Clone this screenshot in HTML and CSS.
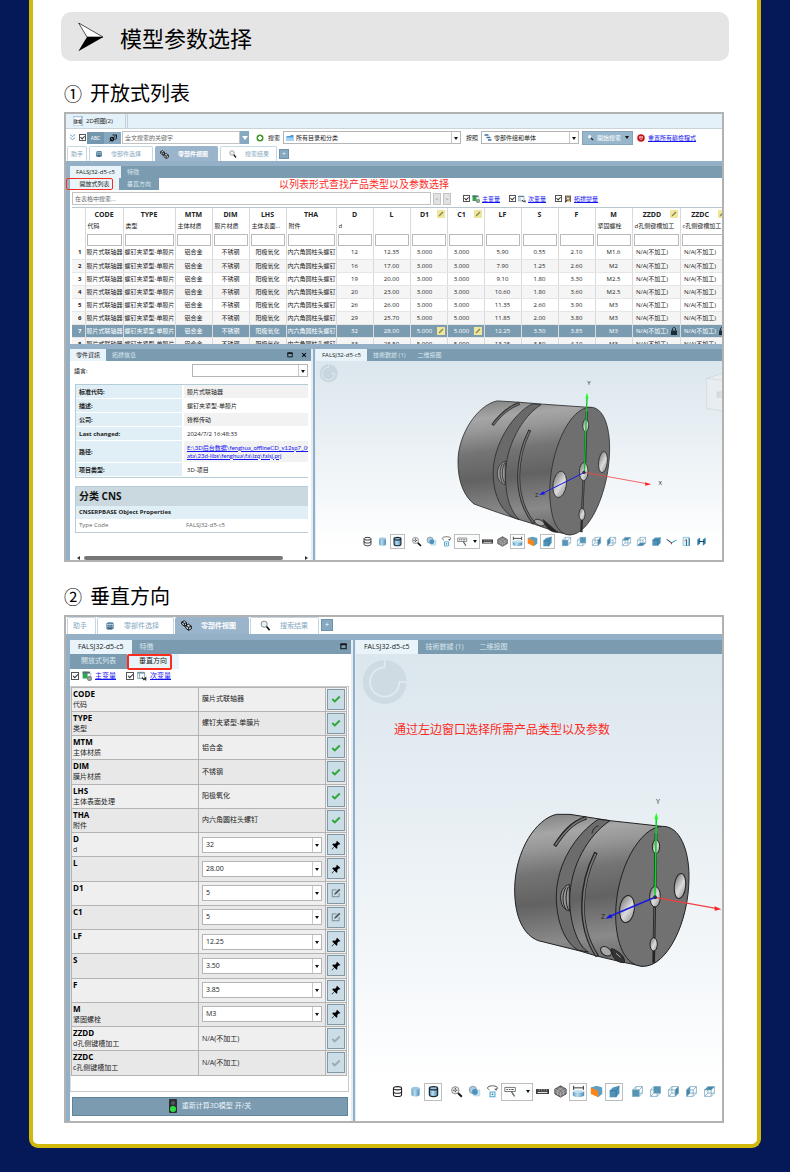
FILE: index.html
```html
<!DOCTYPE html>
<html lang="zh-CN">
<head>
<meta charset="utf-8">
<meta name="viewport" content="width=device-width, initial-scale=1">
<title>模型参数选择</title>
<link rel="stylesheet" href="styles.css">
</head>
<body>
<svg class="defs" aria-hidden="true">
  <defs>
    <linearGradient id="g-blue" x1="0" x2="1" y1="0" y2="0"><stop offset="0" stop-color="#5b9cc4"/><stop offset=".4" stop-color="#b9dcee"/><stop offset="1" stop-color="#4a8bb5"/></linearGradient>
    <linearGradient id="g-drum" x1="0" x2=".12" y1="0" y2="1"><stop offset="0" stop-color="#7c7c7c"/><stop offset=".15" stop-color="#a6a6a6"/><stop offset=".24" stop-color="#989898"/><stop offset=".4" stop-color="#747474"/><stop offset=".6" stop-color="#626262"/><stop offset=".86" stop-color="#8a8a8a"/><stop offset="1" stop-color="#707070"/></linearGradient>
    <linearGradient id="g-hole" x1="0" x2="1" y1="0" y2="1"><stop offset="0" stop-color="#6c6c6c"/><stop offset=".55" stop-color="#dcdcdc"/><stop offset="1" stop-color="#8a8a8a"/></linearGradient>
    <symbol id="cyl-wire" viewBox="0 0 16 16"><path d="M3 4v8c0 3 10 3 10 0V4M3 8c0 3 10 3 10 0" fill="none" stroke="#222" stroke-width="1.3"/><ellipse cx="8" cy="4" rx="5" ry="2" fill="#fff" stroke="#222" stroke-width="1.3"/></symbol>
    <symbol id="cyl-fill" viewBox="0 0 16 16"><path d="M3 4v8c0 3 10 3 10 0V4" fill="url(#g-blue)"/><ellipse cx="8" cy="4" rx="5" ry="2" fill="#9ac6df"/></symbol>
    <symbol id="cyl-edge" viewBox="0 0 16 16"><path d="M3 4v8c0 3 10 3 10 0V4" fill="url(#g-blue)" stroke="#1c2b36" stroke-width="1.6"/><ellipse cx="8" cy="4" rx="5" ry="2" fill="#9ac6df" stroke="#1c2b36" stroke-width="1.6"/></symbol>
    <symbol id="zoom-fit" viewBox="0 0 16 16"><circle cx="6.5" cy="6.5" r="4.5" fill="#eee" stroke="#888" stroke-width="1.2"/><path d="M6.5 3.5v6M3.5 6.5h6" stroke="#444" stroke-width="1.3" stroke-dasharray="2 1.5"/><path d="M10 10l4.5 4.5" stroke="#111" stroke-width="2.4"/></symbol>
    <symbol id="spheres" viewBox="0 0 16 16"><path d="M7 6h7.500v7.500H7z" fill="#c6e2f0" stroke="#b0d0e0" stroke-width=".6"/><circle cx="6" cy="6" r="4.5" fill="#a9cde2" stroke="#8a8f94"/><circle cx="8.500" cy="8.500" r="3.500" fill="#4a93bd"/></symbol>
    <symbol id="orbit" viewBox="0 0 16 16"><path d="M4 6C-1 3 4 1 8 1s9 2 4 5" fill="none" stroke="#555" stroke-width="1.2"/><path d="M10 5l3 2 .6-3z" fill="#555"/><path d="M5 8.500h6v6H5z" fill="#fff" stroke="#4aa3cc" stroke-width="1.300"/><path d="M7 10.500h2v2H7z" fill="#1f7fae"/></symbol>
    <symbol id="measure" viewBox="0 0 16 16"><path d="M1 3h13v5H1z" fill="#fff" stroke="#777" stroke-width="1.2"/><path d="M3 5.500h2m1 0h2m1 0h3" stroke="#555" stroke-width="1.4"/><path d="M9 8l4 6" stroke="#555" stroke-width="1.500"/></symbol>
    <symbol id="ruler" viewBox="0 0 16 16"><path d="M0 5h16v6H0z" fill="#3a3a3a"/><path d="M2 8.500h12v1.300H2z" fill="#e9e9e9"/><path d="M4 5.500v1.500M7 5.500v1.500M10 5.500v1.500M13 5.500v1.500" stroke="#ddd"/></symbol>
    <symbol id="mesh" viewBox="0 0 16 16"><path d="M8 1l7 4v6l-7 4-7-4V5z" fill="#777" stroke="#444"/><path d="M1 8l7 4 7-4M4.500 3l7 4v6M11.500 3l-7 4v6M1 5l7 4 7-4M8 9v6" fill="none" stroke="#d2d2d2" stroke-width=".6"/></symbol>
    <symbol id="span" viewBox="0 0 16 16"><path d="M2 1v5M14 1v5M2 3.500h12" stroke="#333" stroke-width="1.200"/><path d="M1 8v4.500c0 3 14 3 14 0V8" fill="url(#g-blue)"/><ellipse cx="8" cy="8" rx="7" ry="1.800" fill="#bfe0ef"/></symbol>
    <symbol id="cut" viewBox="0 0 16 16"><path d="M1 3l7-2 7 2v8l-5 4z" fill="#5c9ec4"/><path d="M1 3l9 4v8l-9-4z" fill="#f8861c"/></symbol>
    <symbol id="solid" viewBox="0 0 16 16"><path d="M2 7l4-4 8-2v9l-4 5H2z" fill="#4e92b8"/><path d="M2 7h8l4-6M10 7v8" fill="none" stroke="#2f6e92" stroke-width=".8"/></symbol>
    <symbol id="cube" viewBox="0 0 16 16"><path d="M2 6h8v8H2zM6 2h8v8H6zM2 6l4-4M10 6l4-4M10 14l4-4M2 14l4-4" fill="none" stroke="#6b9db8" stroke-width=".9"/></symbol>
    <symbol id="cube-front" viewBox="0 0 16 16"><path d="M2 6h8v8H2z" fill="#4e92b8"/><use href="#cube"/></symbol>
    <symbol id="cube-back" viewBox="0 0 16 16"><path d="M6 2h8v8H6z" fill="#4e92b8"/><use href="#cube"/></symbol>
    <symbol id="cube-right" viewBox="0 0 16 16"><path d="M10 6l4-4v8l-4 4z" fill="#3f86af"/><use href="#cube"/></symbol>
    <symbol id="cube-left" viewBox="0 0 16 16"><path d="M2 6l4-4v8l-4 4z" fill="#3f86af"/><use href="#cube"/></symbol>
    <symbol id="cube-top" viewBox="0 0 16 16"><path d="M2 6l4-4h8l-4 4z" fill="#3f86af"/><use href="#cube"/></symbol>
    <symbol id="cube-bottom" viewBox="0 0 16 16"><path d="M2 14l4-4h8l-4 4z" fill="#3f86af"/><use href="#cube"/></symbol>
    <symbol id="cube-all" viewBox="0 0 16 16"><path d="M2 6l4-4h8v8l-4 4H2z" fill="#4e92b8"/><path d="M2 6h8l4-4M10 6v8" fill="none" stroke="#2f6e92" stroke-width=".9"/></symbol>
    <symbol id="axes" viewBox="0 0 16 16"><path d="M1 5l7 5" stroke="#26536e" stroke-width="1.500"/><path d="M8 10l7-4" stroke="#2e9bb0" stroke-width="1.500"/><path d="M8 9v3" stroke="#c23a3a" stroke-width="1.600"/></symbol>
    <symbol id="doc-in" viewBox="0 0 16 16"><path d="M3 2h9v12H3z" fill="#e2f2f8" stroke="#6bb6d0"/><path d="M8 5v9M12 3v11" stroke="#2a6c88" stroke-width="1.500"/><path d="M5 7l3-2" stroke="#c33"/></symbol>
    <symbol id="flip" viewBox="0 0 16 16"><path d="M2 5l4-3v9l-4 3zM10 5l4-3v9l-4 3z" fill="#2d7fa8"/><path d="M4 8h8" stroke="#16475f" stroke-width="1.500"/></symbol>
    <symbol id="crate" viewBox="0 0 16 16"><path d="M2 4l3-2h7l2 2v8l-3 2H4l-2-2z" fill="#5d87a8"/><path d="M3 6h10M4 9h3m2 0h3" stroke="#dcebf4" stroke-width="1.600"/><path d="M6 6v6h4V6" stroke="#24465f" fill="none"/></symbol>
    <symbol id="cubes" viewBox="0 0 16 16"><path d="M1 3l4-2 3 3v4l-3 1-4-3zM7 8l4-2 4 3v4l-4 2-4-3zM1 3l4 2 3-1M5 5v4M7 8l4 3 4-2M11 11v4" fill="#cfd8dd" stroke="#111" stroke-width="1.400"/></symbol>
    <symbol id="lens" viewBox="0 0 16 16"><circle cx="6" cy="6" r="4.500" fill="#e6f2f8" stroke="#777" stroke-width="1.200"/><path d="M9.500 9.500L14 15" stroke="#111" stroke-width="2.400"/></symbol>
    <symbol id="pencil" viewBox="0 0 16 16"><path d="M0 0h16v16H0z" fill="#efe79b"/><path d="M3 13l1-3 7-7 2 2-7 7z" fill="#8b8654"/></symbol>
    <symbol id="lock" viewBox="0 0 16 16"><path d="M2 7h12v9H2z" fill="#1d2d38"/><path d="M5 7V4c0-4 6-4 6 0v3" fill="none" stroke="#1d2d38" stroke-width="2"/></symbol>
    <symbol id="var-main" viewBox="0 0 16 16"><path d="M1 1h8v11H1z" fill="#2da84e"/><path d="M1 1h12v3H1z" fill="#546b74"/><path d="M9 4h5v6" fill="none" stroke="#8fa5ae"/><circle cx="12" cy="12" r="3.500" fill="#93a49b" stroke="#53645b"/></symbol>
    <symbol id="var-sub" viewBox="0 0 16 16"><path d="M1 2h11v10H1z" fill="#f4fafc" stroke="#5c8296"/><path d="M1 2h11v2H1z" fill="#5c8296"/><path d="M4 4v8" stroke="#5c8296"/><path d="M8 10l3 4 3-3v4" fill="none" stroke="#151515" stroke-width="1.700"/></symbol>
    <symbol id="var-topo" viewBox="0 0 16 16"><path d="M2 2h12v11H2z" fill="#d9a264"/><path d="M2 2h12M3 2v12M13 2v12" stroke="#4b4b4b" stroke-width="1.600"/><circle cx="8" cy="7" r="3" fill="#eee" stroke="#333"/><path d="M6 10l-3 5" stroke="#222" stroke-width="2"/></symbol>
    <symbol id="tick" viewBox="0 0 16 16"><path d="M2 8l4 4 8-8" fill="none" stroke="currentColor" stroke-width="3"/></symbol>
    <symbol id="pin" viewBox="0 0 16 16"><path d="M9.500 1l5.500 5.500-1.500.8-1.200-.3-2.300 2.500.2 3.200-1.500 1.300-3-3.200L1.500 15l-.5-.5 4.200-4.300L2 7.200l1.300-1.500 3.200.2L9 3.600l-.3-1.200z" fill="currentColor"/></symbol>
    <symbol id="edit" viewBox="0 0 16 16"><path d="M13 8v6H2V3h7" fill="none" stroke="#6d7f88" stroke-width="1.400"/><path d="M5 11l1-3 7-7 2 2-7 7z" fill="#4d5d66"/></symbol>
    <symbol id="window" viewBox="0 0 16 16"><path d="M2 3h12v10H2z" fill="none" stroke="#111" stroke-width="2.500"/><path d="M1 3h14" stroke="#111" stroke-width="4"/></symbol>
    <symbol id="close" viewBox="0 0 16 16"><path d="M3 3l10 10M13 3L3 13" stroke="#111" stroke-width="3"/></symbol>
  </defs>
</svg>

<main class="card">
  <header class="banner">
    <svg class="banner-arrow" viewBox="0 0 78 90" aria-hidden="true"><path d="M2 3l73 42H27z" fill="#fff" stroke="#000" stroke-width="2"/><path d="M27 45h49L1 88z" fill="#000"/></svg>
    <h1>模型参数选择</h1>
  </header>

  <h2 class="step"><span class="step-no">①</span>开放式列表</h2>

  <section class="frame">
    <div class="doc-bar"><div class="doc-tab"><svg class="ic10" viewBox="0 0 16 16" aria-hidden="true"><path d="M0 0h16v16H0z" fill="#a7c3de"/><path d="M1 2h12v13H1z" fill="#fff"/><path d="M2 6h3v6H2zM5 7h6v4H5zM11 6h2v6h-2z" fill="#ddd" stroke="#333"/></svg>2D视图(2)</div></div>
    <div class="query">
      <svg class="ic7" viewBox="0 0 16 16" aria-hidden="true"><path d="M2 1l6 5 6-5M2 8l6 5 6-5" fill="none" stroke="#5b95bd" stroke-width="2"/></svg>
      <input class="check" type="checkbox" checked aria-label="启用全文搜索">
      <div class="modes"><button type="button">ABC</button><button class="on" type="button" aria-label="几何搜索"><svg class="ic8" viewBox="0 0 16 16"><circle cx="6" cy="10" r="3.500" fill="none" stroke="#111" stroke-width="2.500"/><path d="M7 2h8v7l-4 2M1 15L13 4" fill="none" stroke="#111" stroke-width="1.800"/></svg></button></div>
      <div class="fulltext"><input class="field" type="text" placeholder="全文搜索的关键字" aria-label="全文搜索"><button type="button" aria-label="展开"></button></div>
      <svg class="ic8 plus" viewBox="0 0 16 16" aria-hidden="true"><circle cx="8" cy="8" r="7" fill="#3b9b24"/><path d="M8 4v8M4 8h8" stroke="#fff" stroke-width="4"/></svg>
      <label for="dirs">搜索</label>
      <div class="combo dirs"><svg class="ic8" viewBox="0 0 16 16" aria-hidden="true"><path d="M1 4h7l2-2h5v12H1z" fill="#4c9bd6"/><path d="M1 7h14v7H1z" fill="#a8d4f2"/></svg><select id="dirs"><option>所有目录和分类</option></select></div>
      <label for="kind">按照</label>
      <div class="combo kind"><svg class="ic8" viewBox="0 0 16 16" aria-hidden="true"><path d="M1 2h8M5 7h8M8 12h7" stroke="#3a6ea5" stroke-width="3"/></svg><select id="kind"><option>零部件组和单体</option></select></div>
      <button class="start" type="button"><svg class="ic7" viewBox="0 0 16 16"><circle cx="6" cy="6" r="4" fill="#e8f2f8"/><path d="M9 9l5 5" stroke="#222" stroke-width="3"/></svg>開始搜索<i class="caret"></i></button>
      <svg class="ic8" viewBox="0 0 16 16" aria-hidden="true"><circle cx="8" cy="8" r="7.500" fill="#c4161c"/><path d="M4 5h8l-2 6H6z" fill="#fff"/><path d="M6 7l4 3M10 7l-4 3" stroke="#c4161c" stroke-width="1.500"/></svg>
      <a href="#reset">重置所有篩檢程式</a>
    </div>
    <nav class="tabs">
      <a class="tab t-help" href="#help">助手</a>
      <a class="tab t-pick" href="#pick"><svg class="ic8"><use href="#crate"/></svg>零部件选择</a>
      <a class="tab t-view current" href="#view"><svg class="ic9"><use href="#cubes"/></svg>零部件视图</a>
      <a class="tab t-find" href="#find"><svg class="ic8"><use href="#lens"/></svg>搜索结果</a>
      <button class="add" type="button" aria-label="新标签">+</button>
    </nav>
    <div class="dock">
      <div class="barline"><span class="bar-tab current">FALSJ32-d5-c5</span><span class="bar-tab">特徵</span></div>
      <div class="subtabs"><button class="sub current marked" type="button">開放式列表</button><button class="sub" type="button">垂直方向</button><strong class="note">以列表形式查找产品类型以及参数选择</strong></div>
      <div class="filter">
        <input class="field" type="text" placeholder="在表格中搜索..." aria-label="在表格中搜索">
        <button class="step-btn" type="button">&lt;</button><button class="step-btn" type="button">&gt;</button>
        <div class="vars">
          <span class="var"><input class="check" type="checkbox" checked aria-label="主变量"><svg class="ic8"><use href="#var-main"/></svg><a href="#main">主变量</a></span>
          <span class="var"><input class="check" type="checkbox" checked aria-label="次变量"><svg class="ic8"><use href="#var-sub"/></svg><a href="#sub">次变量</a></span>
          <span class="var"><input class="check" type="checkbox" checked aria-label="拓撲變量"><svg class="ic8"><use href="#var-topo"/></svg><a href="#topo">拓撲變量</a></span>
        </div>
      </div>
      <div class="sheet">
        <table class="parts">
          <colgroup><col class="c-no"><col class="c-code"><col class="c-type"><col><col><col><col class="c-tha"><col><col><col><col><col><col><col><col><col class="c-zz"><col class="c-zz"></colgroup>
          <thead>
            <tr class="names"><th></th><th>CODE<small>代码</small></th><th>TYPE<small>类型</small></th><th>MTM<small>主体材质</small></th><th>DIM<small>膜片材质</small></th><th>LHS<small>主体表面...</small></th><th>THA<small>附件</small></th><th>D<small>d</small></th><th>L</th><th class="ed">D1<svg class="ic8 corner"><use href="#pencil"/></svg></th><th class="ed">C1<svg class="ic8 corner"><use href="#pencil"/></svg></th><th>LF</th><th>S</th><th>F</th><th>M<small>紧固螺栓</small></th><th class="ed">ZZDD<svg class="ic8 corner"><use href="#pencil"/></svg><small>d孔侧键槽加工</small></th><th class="ed">ZZDC<svg class="ic8 corner"><use href="#pencil"/></svg><small>c孔侧键槽加工</small></th></tr>
            <tr class="inputs"><td></td><td><input aria-label="CODE"></td><td><input aria-label="TYPE"></td><td><input aria-label="MTM"></td><td><input aria-label="DIM"></td><td><input aria-label="LHS"></td><td><input aria-label="THA"></td><td><input aria-label="D"></td><td><input aria-label="L"></td><td><input aria-label="D1"></td><td><input aria-label="C1"></td><td><input aria-label="LF"></td><td><input aria-label="S"></td><td><input aria-label="F"></td><td><input aria-label="M"></td><td><input aria-label="ZZDD"></td><td><input aria-label="ZZDC"></td></tr>
          </thead>
          <tbody>
            <tr><th>1</th><td>膜片式联轴器</td><td>螺钉夹紧型-单膜片</td><td>铝合金</td><td>不锈钢</td><td>阳极氧化</td><td>内六角圆柱头螺钉</td><td>12</td><td>12.35</td><td class="ed">3.000</td><td class="ed">3.000</td><td>5.90</td><td>0.55</td><td>2.10</td><td>M1.6</td><td class="ed">N/A(不加工)</td><td class="ed">N/A(不加工)</td></tr>
            <tr><th>2</th><td>膜片式联轴器</td><td>螺钉夹紧型-单膜片</td><td>铝合金</td><td>不锈钢</td><td>阳极氧化</td><td>内六角圆柱头螺钉</td><td>16</td><td>17.00</td><td class="ed">3.000</td><td class="ed">3.000</td><td>7.90</td><td>1.25</td><td>2.60</td><td>M2</td><td class="ed">N/A(不加工)</td><td class="ed">N/A(不加工)</td></tr>
            <tr><th>3</th><td>膜片式联轴器</td><td>螺钉夹紧型-单膜片</td><td>铝合金</td><td>不锈钢</td><td>阳极氧化</td><td>内六角圆柱头螺钉</td><td>19</td><td>20.00</td><td class="ed">3.000</td><td class="ed">3.000</td><td>9.10</td><td>1.80</td><td>3.30</td><td>M2.5</td><td class="ed">N/A(不加工)</td><td class="ed">N/A(不加工)</td></tr>
            <tr><th>4</th><td>膜片式联轴器</td><td>螺钉夹紧型-单膜片</td><td>铝合金</td><td>不锈钢</td><td>阳极氧化</td><td>内六角圆柱头螺钉</td><td>20</td><td>23.00</td><td class="ed">3.000</td><td class="ed">3.000</td><td>10.60</td><td>1.80</td><td>3.60</td><td>M2.5</td><td class="ed">N/A(不加工)</td><td class="ed">N/A(不加工)</td></tr>
            <tr><th>5</th><td>膜片式联轴器</td><td>螺钉夹紧型-单膜片</td><td>铝合金</td><td>不锈钢</td><td>阳极氧化</td><td>内六角圆柱头螺钉</td><td>26</td><td>26.00</td><td class="ed">3.000</td><td class="ed">3.000</td><td>11.35</td><td>2.60</td><td>3.90</td><td>M3</td><td class="ed">N/A(不加工)</td><td class="ed">N/A(不加工)</td></tr>
            <tr><th>6</th><td>膜片式联轴器</td><td>螺钉夹紧型-单膜片</td><td>铝合金</td><td>不锈钢</td><td>阳极氧化</td><td>内六角圆柱头螺钉</td><td>29</td><td>25.70</td><td class="ed">5.000</td><td class="ed">5.000</td><td>11.85</td><td>2.00</td><td>3.80</td><td>M3</td><td class="ed">N/A(不加工)</td><td class="ed">N/A(不加工)</td></tr>
            <tr class="selected"><th>7</th><td>膜片式联轴器</td><td>螺钉夹紧型-单膜片</td><td>铝合金</td><td>不锈钢</td><td>阳极氧化</td><td>内六角圆柱头螺钉</td><td>32</td><td>28.00</td><td class="ed">5.000<svg class="ic8 corner"><use href="#pencil"/></svg></td><td class="ed">5.000<svg class="ic8 corner"><use href="#pencil"/></svg></td><td>12.25</td><td>3.50</td><td>3.85</td><td>M3</td><td class="ed">N/A(不加工)<svg class="ic8 corner"><use href="#lock"/></svg></td><td class="ed">N/A(不加工)<svg class="ic8 corner"><use href="#lock"/></svg></td></tr>
            <tr><th>8</th><td>膜片式联轴器</td><td>螺钉夹紧型-单膜片</td><td>铝合金</td><td>不锈钢</td><td>阳极氧化</td><td>内六角圆柱头螺钉</td><td>33</td><td>28.50</td><td class="ed">5.000</td><td class="ed">5.000</td><td>13.25</td><td>3.50</td><td>4.10</td><td>M3</td><td class="ed">N/A(不加工)</td><td class="ed">N/A(不加工)</td></tr>
          </tbody>
        </table>
      </div>
    </div>
    <div class="dock split split-info">
      <div class="panel">
        <div class="barline"><span class="bar-tab current">零件資訊</span><span class="bar-tab">拓撲信息</span><span class="tools"><button type="button" aria-label="还原"><svg class="ic6"><use href="#window"/></svg></button><button type="button" aria-label="关闭"><svg class="ic6"><use href="#close"/></svg></button></span></div>
        <div class="lang"><label for="lang">語言:</label><div class="combo"><select id="lang"><option></option></select></div></div>
        <table class="info">
          <tr><th>标准代码:</th><td>膜片式联轴器</td></tr>
          <tr><th>描述:</th><td>螺钉夹紧型-单膜片</td></tr>
          <tr><th>公司:</th><td>锋桦传动</td></tr>
          <tr><th>Last changed:</th><td>2024/7/2 16:48:33</td></tr>
          <tr><th>路径:</th><td><a href="#path">E:\3D后台数据\fenghua_offlineCD_v12sp7_092<br>ata\23d-libs\fenghua\fa\lzq\falsj.prj</a></td></tr>
          <tr><th>项目类型:</th><td>3D-项目</td></tr>
        </table>
        <div class="cns"><h3>分类 CNS</h3><h4>CNSERPBASE Object Properties</h4><dl><dt>Type Code</dt><dd>FALSJ32-d5-c5</dd></dl></div>
        <div class="scroll"><i class="arr left"></i><i class="thumb"></i><i class="arr right"></i></div>
      </div>
      <div class="splitter"></div>
      <div class="panel view">
        <div class="barline"><span class="bar-tab current">FALSJ32-d5-c5</span><span class="bar-tab">技術數據 (1)</span><span class="bar-tab">二维投图</span></div>
        <div class="viewport">
          <svg class="scene" viewBox="15 63 1221 597" role="img" aria-label="联轴器三维模型">
            <circle cx="53" cy="100" r="27" fill="#c8d6df"/><path d="M53 82a19 19 0 1 0 18 18h-10M53 82v-9" fill="none" stroke="#dfe9ef" stroke-width="3"/>
            <path d="M1190 115l60-18v118l-60-9z" fill="#e7edf0" stroke="#cdd6da" stroke-width="2"/><path d="M1190 115l60 8" stroke="#cdd6da" stroke-width="2"/><text x="1219" y="172" font-size="20" fill="#c3cbcf">前</text>
            <g stroke="#2c2c2c" stroke-width="2.500" stroke-linejoin="round">
              <path d="M560 183L625 187L700 193L845 203L780 586L738 577L672 554L620 538L560 518L490 493C462 470 442 430 442 365C442 285 500 195 560 183Z" fill="url(#g-drum)"/>
              <path d="M665 192C610 220 548 310 548 400C548 470 575 522 620 538L626 540C602 515 585 480 585 405C585 320 635 230 692 194Z" fill="#696969"/>
              <g fill="none"><path d="M627 190C595 202 568 226 546 256M658 271C618 350 604 470 671 552" stroke-width="9"/><path d="M625 191C595 203 569 227 548 254M657 274C618 352 606 470 669 549" stroke="#707070" stroke-width="4"/></g>
              <path d="M584 364C568 370 560 385 560 402C560 420 572 432 584 435Z" fill="#999"/><path d="M576 372c-10 16-10 40 0 56M582 370c-9 18-9 42 0 60" fill="none"/>
              <ellipse cx="687" cy="549" rx="16" ry="8" fill="#a8a8a8" transform="rotate(25 687 549)"/><path d="M698 540l44 38c-18 2-36-10-44-38z" fill="#262626"/>
              <path d="M840 202C880 202 898 260 898 325C898 450 840 586 778 586C738 586 718 530 718 455C718 340 775 202 840 202Z" fill="#6f6f6f"/>
              <path d="M829 215L824 370M820 420L813 578" stroke-width="7"/><path d="M820 420L816 510" stroke="#777" stroke-width="2"/>
              <ellipse cx="826" cy="257" rx="9" ry="19" fill="url(#g-hole)"/><ellipse cx="815" cy="524" rx="9" ry="18" fill="url(#g-hole)"/>
              <ellipse cx="748" cy="434" rx="20" ry="40" fill="url(#g-hole)" transform="rotate(8 748 434)"/><ellipse cx="878" cy="367" rx="13" ry="32" fill="url(#g-hole)" transform="rotate(6 878 367)"/><ellipse cx="820" cy="396" rx="13" ry="27" fill="url(#g-hole)"/>
            </g>
            <path d="M822 398L830 170" stroke="#0fc22a" stroke-width="4"/><path d="M830 158l-5 18h10z" fill="#1fff1f"/>
            <path d="M822 398L1010 432" stroke="#f04a4a" stroke-width="2.500"/><path d="M1023 434l-18-6v10z" fill="#f22"/>
            <path d="M822 398L695 462" stroke="#1a1ae0" stroke-width="3"/><path d="M686 466l18-2-6-9z" fill="#11e"/><circle cx="821" cy="398" r="5" fill="#23305c"/>
            <g font-size="18" fill="#222"><text x="831" y="135">Y</text><text x="1045" y="437">X</text><text x="674" y="471">Z</text></g>
          </svg>
          <div class="toolbar">
            <button type="button" aria-label="线框"><svg><use href="#cyl-wire"/></svg></button><button type="button" aria-label="着色"><svg><use href="#cyl-fill"/></svg></button><button class="on" type="button" aria-label="带边着色"><svg><use href="#cyl-edge"/></svg></button>
            <button class="lead" type="button" aria-label="缩放"><svg><use href="#zoom-fit"/></svg></button><button type="button" aria-label="透明"><svg><use href="#spheres"/></svg></button><button type="button" aria-label="旋转"><svg><use href="#orbit"/></svg></button><button class="on wide" type="button" aria-label="测量"><svg><use href="#measure"/></svg><i class="caret"></i></button><button type="button" aria-label="标尺"><svg><use href="#ruler"/></svg></button><button type="button" aria-label="网格"><svg><use href="#mesh"/></svg></button><button class="on" type="button" aria-label="尺寸"><svg><use href="#span"/></svg></button><button type="button" aria-label="剖切"><svg><use href="#cut"/></svg></button><button class="on" type="button" aria-label="实体"><svg><use href="#solid"/></svg></button>
            <button class="lead" type="button" aria-label="前视"><svg><use href="#cube-front"/></svg></button><button type="button" aria-label="后视"><svg><use href="#cube-back"/></svg></button><button type="button" aria-label="右视"><svg><use href="#cube-right"/></svg></button><button type="button" aria-label="左视"><svg><use href="#cube-left"/></svg></button><button type="button" aria-label="顶视"><svg><use href="#cube-top"/></svg></button><button type="button" aria-label="底视"><svg><use href="#cube-bottom"/></svg></button><button type="button" aria-label="等轴测"><svg><use href="#cube-all"/></svg></button><button type="button" aria-label="坐标轴"><svg><use href="#axes"/></svg></button><button type="button" aria-label="导出"><svg><use href="#doc-in"/></svg></button><button type="button" aria-label="翻转"><svg><use href="#flip"/></svg></button>
          </div>
        </div>
      </div>
    </div>
  </section>

  <h2 class="step"><span class="step-no">②</span>垂直方向</h2>

  <section class="frame large">
    <nav class="tabs">
      <a class="tab t-help" href="#help">助手</a>
      <a class="tab t-pick" href="#pick"><svg class="ic10"><use href="#crate"/></svg>零部件选择</a>
      <a class="tab t-view current" href="#view"><svg class="ic11"><use href="#cubes"/></svg>零部件视图</a>
      <a class="tab t-find" href="#find"><svg class="ic11"><use href="#lens"/></svg>搜索结果</a>
      <button class="add" type="button" aria-label="新标签">+</button>
    </nav>
    <div class="dock split split-form">
      <div class="panel">
        <div class="barline"><span class="bar-tab current">FALSJ32-d5-c5</span><span class="bar-tab">特徵</span><span class="tools"><button type="button" aria-label="还原"><svg class="ic7"><use href="#window"/></svg></button></span></div>
        <div class="subtabs"><button class="sub" type="button">開放式列表</button><button class="sub current marked" type="button">垂直方向</button></div>
        <div class="vars">
          <span class="var"><input class="check" type="checkbox" checked aria-label="主变量"><svg class="ic10"><use href="#var-main"/></svg><a href="#main">主变量</a></span>
          <span class="var"><input class="check" type="checkbox" checked aria-label="次变量"><svg class="ic10"><use href="#var-sub"/></svg><a href="#sub">次变量</a></span>
        </div>
        <div class="form-box">
          <table class="form">
            <tr><th>CODE<small>代码</small></th><td>膜片式联轴器</td><td><button class="ok" type="button" aria-label="确认"><svg><use href="#tick"/></svg></button></td></tr>
            <tr><th>TYPE<small>类型</small></th><td>螺钉夹紧型-单膜片</td><td><button class="ok" type="button" aria-label="确认"><svg><use href="#tick"/></svg></button></td></tr>
            <tr><th>MTM<small>主体材质</small></th><td>铝合金</td><td><button class="ok" type="button" aria-label="确认"><svg><use href="#tick"/></svg></button></td></tr>
            <tr><th>DIM<small>膜片材质</small></th><td>不锈钢</td><td><button class="ok" type="button" aria-label="确认"><svg><use href="#tick"/></svg></button></td></tr>
            <tr><th>LHS<small>主体表面处理</small></th><td>阳极氧化</td><td><button class="ok" type="button" aria-label="确认"><svg><use href="#tick"/></svg></button></td></tr>
            <tr><th>THA<small>附件</small></th><td>内六角圆柱头螺钉</td><td><button class="ok" type="button" aria-label="确认"><svg><use href="#tick"/></svg></button></td></tr>
            <tr><th><label for="f-d">D<small>d</small></label></th><td><div class="combo"><select id="f-d"><option>32</option></select></div></td><td><button type="button" aria-label="固定"><svg><use href="#pin"/></svg></button></td></tr>
            <tr><th><label for="f-l">L</label></th><td><div class="combo"><select id="f-l"><option>28.00</option></select></div></td><td><button type="button" aria-label="固定"><svg><use href="#pin"/></svg></button></td></tr>
            <tr><th><label for="f-d1">D1</label></th><td><div class="combo"><select id="f-d1"><option>5</option></select></div></td><td><button type="button" aria-label="编辑"><svg><use href="#edit"/></svg></button></td></tr>
            <tr><th><label for="f-c1">C1</label></th><td><div class="combo"><select id="f-c1"><option>5</option></select></div></td><td><button type="button" aria-label="编辑"><svg><use href="#edit"/></svg></button></td></tr>
            <tr><th><label for="f-lf">LF</label></th><td><div class="combo"><select id="f-lf"><option>12.25</option></select></div></td><td><button type="button" aria-label="固定"><svg><use href="#pin"/></svg></button></td></tr>
            <tr><th><label for="f-s">S</label></th><td><div class="combo"><select id="f-s"><option>3.50</option></select></div></td><td><button type="button" aria-label="固定"><svg><use href="#pin"/></svg></button></td></tr>
            <tr><th><label for="f-f">F</label></th><td><div class="combo"><select id="f-f"><option>3.85</option></select></div></td><td><button type="button" aria-label="固定"><svg><use href="#pin"/></svg></button></td></tr>
            <tr><th><label for="f-m">M<small>紧固螺栓</small></label></th><td><div class="combo"><select id="f-m"><option>M3</option></select></div></td><td><button type="button" aria-label="固定"><svg><use href="#pin"/></svg></button></td></tr>
            <tr><th>ZZDD<small>d孔侧键槽加工</small></th><td>N/A(不加工)</td><td><button class="idle" type="button" aria-label="确认"><svg><use href="#tick"/></svg></button></td></tr>
            <tr><th>ZZDC<small>c孔侧键槽加工</small></th><td>N/A(不加工)</td><td><button class="idle" type="button" aria-label="确认"><svg><use href="#tick"/></svg></button></td></tr>
          </table>
        </div>
        <button class="recalc" type="button"><svg viewBox="0 0 8 14"><rect width="8" height="14" rx="1" fill="#2b2f31"/><circle cx="4" cy="4" r="2" fill="#55595b"/><circle cx="4" cy="10" r="3" fill="#2be03c"/></svg>重新计算3D模型 开/关</button>
      </div>
      <div class="splitter"></div>
      <div class="panel view">
        <div class="barline"><span class="bar-tab current">FALSJ32-d5-c5</span><span class="bar-tab">技術數據 (1)</span><span class="bar-tab">二维投图</span></div>
        <div class="viewport">
          <svg class="scene" viewBox="18 -378 1098 1401" role="img" aria-label="联轴器三维模型">
            <circle cx="104" cy="-294" r="66" fill="#cfdbe2"/><path d="M104 -338a44 44 0 1 0 44 44h24M104 -338v-24" fill="none" stroke="#e2ebf0" stroke-width="5"/>
            <g stroke="#222" stroke-width="3" stroke-linejoin="round">
              <path d="M620 103L660 103L780 122L935 139L880 559L820 547L740 528L690 513L565 482C520 465 494 410 494 330C494 210 560 115 620 103Z" fill="url(#g-drum)"/>
              <path d="M745 118C680 160 619 250 619 350C619 425 645 490 686 511L715 516C685 500 659 430 659 360C659 260 715 165 780 122Z" fill="#6c6c6c"/>
              <path d="M726 160c2-12 10-22 20-22" fill="none"/>
              <g fill="none"><path d="M709 113C665 127 640 158 614 198M738 217C688 315 682 440 742 529" stroke-width="11"/><path d="M707 114C665 129 641 160 616 195M737 221C690 317 684 440 740 526" stroke="#777" stroke-width="5"/></g>
              <path d="M658 313C640 318 632 335 632 352C632 374 642 390 658 393Z" fill="#999"/><path d="M648 322c-12 20-12 48 0 66M655 320c-9 20-9 48 0 70" fill="none"/>
              <ellipse cx="768" cy="514" rx="18" ry="12" fill="#a8a8a8" transform="rotate(35 768 514)"/><path d="M784 506C805 510 830 535 822 548C802 548 785 535 784 506Z" fill="#333"/><path d="M798 520l14 12" stroke="#aaa"/>
              <path d="M938 139C990 139 1017 210 1017 290C1017 430 950 559 880 559C825 559 797 490 797 405C797 270 870 139 938 139Z" fill="#717171"/>
              <path d="M918 160L915 325M914 380L911 548" stroke-width="8"/><path d="M914 382L912 472" stroke="#777" stroke-width="2"/>
              <ellipse cx="918" cy="200" rx="11" ry="21" fill="url(#g-hole)"/><ellipse cx="911" cy="493" rx="11" ry="20" fill="url(#g-hole)"/>
              <ellipse cx="831" cy="387" rx="22" ry="41" fill="url(#g-hole)" transform="rotate(7 831 387)"/><ellipse cx="990" cy="318" rx="17" ry="38" fill="url(#g-hole)" transform="rotate(6 990 318)"/><ellipse cx="915" cy="350" rx="16" ry="31" fill="url(#g-hole)"/>
            </g>
            <path d="M915 352L919 115" stroke="#0fd32a" stroke-width="5"/><path d="M919 98l-6 20h12z" fill="#1fff1f"/>
            <path d="M915 352L1098 385" stroke="#f04040" stroke-width="4"/><path d="M1114 388l-20-9v13z" fill="#f22"/>
            <path d="M915 352L780 409" stroke="#1a1ae0" stroke-width="5"/><path d="M766 416l22-3-7-11z" fill="#11e"/><circle cx="915" cy="352" r="6" fill="#23305c"/>
            <g font-size="21" fill="#222"><text x="918" y="73">Y</text><text x="753" y="417">Z</text></g>
          </svg>
          <strong class="note over">通过左边窗口选择所需产品类型以及参数</strong>
          <div class="toolbar">
            <button type="button" aria-label="线框"><svg><use href="#cyl-wire"/></svg></button><button type="button" aria-label="着色"><svg><use href="#cyl-fill"/></svg></button><button class="on" type="button" aria-label="带边着色"><svg><use href="#cyl-edge"/></svg></button>
            <button class="lead" type="button" aria-label="缩放"><svg><use href="#zoom-fit"/></svg></button><button type="button" aria-label="透明"><svg><use href="#spheres"/></svg></button><button type="button" aria-label="旋转"><svg><use href="#orbit"/></svg></button><button class="on wide" type="button" aria-label="测量"><svg><use href="#measure"/></svg><i class="caret"></i></button><button type="button" aria-label="标尺"><svg><use href="#ruler"/></svg></button><button type="button" aria-label="网格"><svg><use href="#mesh"/></svg></button><button class="on" type="button" aria-label="尺寸"><svg><use href="#span"/></svg></button><button type="button" aria-label="剖切"><svg><use href="#cut"/></svg></button><button class="on" type="button" aria-label="实体"><svg><use href="#solid"/></svg></button>
            <button class="lead" type="button" aria-label="前视"><svg><use href="#cube-front"/></svg></button><button type="button" aria-label="后视"><svg><use href="#cube-back"/></svg></button><button type="button" aria-label="右视"><svg><use href="#cube-right"/></svg></button><button type="button" aria-label="左视"><svg><use href="#cube-left"/></svg></button><button type="button" aria-label="顶视"><svg><use href="#cube-top"/></svg></button>
          </div>
        </div>
      </div>
    </div>
  </section>
</main>
</body>
</html>
```

FILE: styles.css
```css
* { box-sizing: border-box; }

body {
  margin: 0;
  padding: 0 29px 24px;
  background: #051959;
  color: #222;
  font-family: "Open Sans", "Noto Sans CJK SC", sans-serif;
}

button, input, select {
  margin: 0;
  padding: 0;
  border: 0;
  border-radius: 0;
  background: none;
  color: inherit;
  font: inherit;
}

select { appearance: none; }
svg { display: block; flex: none; }
a { color: #1414f0; }
h1, h2, h3, h4, dl, dd { margin: 0; }

.defs { position: absolute; width: 0; height: 0; }
.ic6 { width: 6px; height: 6px; }
.ic7 { width: 7px; height: 7px; }
.ic8 { width: 8px; height: 8px; }
.ic9 { width: 9px; height: 9px; }
.ic10 { width: 10px; height: 10px; }
.ic11 { width: 11px; height: 11px; }

.card {
  padding: 12px 28px 21px;
  border: 4px solid #d1b90b;
  border-top: 0;
  border-radius: 0 0 9px 9px;
  background: #fff;
}

.banner {
  display: flex;
  align-items: center;
  gap: 16px;
  height: 49px;
  padding-left: 17px;
  border-radius: 10px;
  background: #e5e5e5;
}
.banner-arrow { width: 26px; height: 30px; }
.banner h1 {
  color: #000;
  font: 400 22px/32px "Noto Sans CJK SC", sans-serif;
}

.step {
  display: flex;
  align-items: center;
  margin: 18px 0 5px 3px;
  color: #000;
  font: 400 20px/28px "Noto Sans CJK SC", sans-serif;
}
.frame + .step { margin-top: 20px; }
.step-no { width: 26px; font-size: 18px; }

/* Application window */
.frame {
  margin: 0 5px 0 3px;
  overflow: hidden;
  border: 2px solid #b2b2b2;
  background: #fff;
  font-size: 6px;
  line-height: 8px;
}
.frame.large { font-size: 7px; line-height: 10px; }

.doc-bar {
  height: 15px;
  padding-left: 2px;
  border-bottom: 1px solid #c9d3d8;
  background: #e4f1f8;
}
.doc-tab {
  display: flex;
  align-items: center;
  gap: 3px;
  width: 60px;
  height: 14px;
  padding-left: 5px;
  border-right: 3px double #c3d0d8;
}

.query {
  display: flex;
  align-items: center;
  height: 17px;
}
.query > * { flex: none; }
.query > svg { margin: 0 3px; }
.query > .plus { margin-left: 7px; }
.query > label { margin-left: 1px; margin-right: 3px; }

.check {
  position: relative;
  width: 7px;
  height: 7px;
  appearance: none;
  border: 1px solid #555;
  background: #fff;
}
.check:checked::after {
  content: "";
  position: absolute;
  left: 1px;
  top: 0;
  width: 2px;
  height: 3px;
  border: solid #333;
  border-width: 0 1px 1px 0;
  transform: rotate(45deg);
}
.large .check { width: 8px; height: 8px; }
.large .check::after { left: 2px; height: 4px; }
.query .check { margin-right: 1px; }

.modes { display: flex; }
.modes button {
  display: grid;
  place-items: center;
  width: 17px;
  height: 12px;
  background: #7597ad;
  color: #fff;
  font-size: 5px;
}
.modes .on { background: #86a9c1; }

.field {
  border: 1px solid #c3c3c3;
  background: #fff;
}
.field::placeholder { color: #666; opacity: 1; }
.fulltext { display: flex; width: 127px; height: 13px; margin-left: 1px; }
.fulltext .field { flex: 1; min-width: 0; padding: 0 2px; }
.fulltext button {
  display: grid;
  place-items: center;
  width: 9px;
  background: #86a9c1;
}
.fulltext button::after {
  content: "";
  border: 3px solid transparent;
  border-top: 4px solid #fff;
  border-bottom: 0;
}

.combo {
  position: relative;
  display: flex;
  align-items: center;
  height: 13px;
  border: 1px solid #b5b5b5;
  background: #fff;
}
.combo > svg { margin: 0 2px; }
.combo select { flex: 1; width: 100%; min-width: 0; height: 11px; padding-right: 9px; }
.combo::after {
  content: "";
  position: absolute;
  right: 2px;
  top: calc(50% - 1px);
  border: 2px solid transparent;
  border-top: 3px solid #111;
  border-bottom: 0;
}
.combo::before {
  content: "";
  position: absolute;
  right: 8px;
  top: 0;
  bottom: 0;
  border-left: 1px solid #c8c8c8;
}
.query .dirs { width: 178px; margin-right: 4px; }
.query .kind { width: 98px; margin-right: 3px; }

.start {
  display: flex;
  align-items: center;
  gap: 3px;
  width: 51px;
  height: 14px;
  margin-right: 1px;
  padding: 0 3px 0 4px;
  border: 1px solid #85a5bb;
  background: #97b6cb;
  color: #fff;
}
.caret {
  margin-left: auto;
  border: 2px solid transparent;
  border-top: 3px solid #111;
  border-bottom: 0;
}

.tabs {
  display: flex;
  gap: 2px;
  height: 15px;
  padding-left: 1px;
}
.tab {
  display: flex;
  align-items: center;
  border: 1px solid #c6d7e2;
  border-bottom: 0;
  border-radius: 2px 2px 0 0;
  color: #86a9c0;
  text-decoration: none;
}
.tab.current { border-color: #9ab5cb; background: #9ab5cb; color: #fff; font-weight: 700; }
.t-help { width: 20px; padding-left: 3px; }
.t-pick { width: 64px; padding-left: 5px; gap: 8px; }
.t-view { width: 63px; padding-left: 4px; gap: 9px; }
.t-find { width: 57px; padding-left: 8px; gap: 8px; }
.add {
  display: grid;
  place-items: center;
  align-self: center;
  width: 10px;
  height: 10px;
  border: 1px solid #6f93ac;
  background: #86a9c1;
  color: #fff;
}
.large .tabs { gap: 1px; height: 17px; }
.large .t-help { width: 29px; padding-left: 5px; }
.large .t-pick { width: 77px; padding-left: 7px; gap: 9px; }
.large .t-view { width: 74px; padding-left: 5px; gap: 9px; }
.large .t-find { width: 69px; padding-left: 9px; gap: 9px; }
.large .add { width: 12px; height: 12px; margin-left: 1px; }

.dock {
  border: solid #93b0c7;
  border-width: 5px 0 0 4px;
}
.large .dock { border-top-width: 6px; }

.barline {
  display: flex;
  height: 12px;
  background: #7a9bb0;
  color: #dbe7ee;
}
.bar-tab { padding: 0 6px; line-height: 12px; white-space: nowrap; }
.bar-tab.current { background: #e8f4f9; color: #222; }
.large .barline { height: 14px; }
.large .bar-tab { padding: 0 8px; line-height: 14px; }
.tools { display: flex; gap: 8px; margin-left: auto; padding-right: 4px; align-items: center; }

.subtabs { display: flex; height: 12px; }
.sub { width: 40px; background: #7a9bb0; color: #dbe7ee; }
.sub.current { width: 49px; background: #e8f4f9; color: #222; }
.note {
  color: #fb2b1f;
  font: 400 10px/12px "Noto Sans CJK SC", sans-serif;
}
.subtabs .note { margin-left: 120px; }
.marked { position: relative; }
.marked::after {
  content: "";
  position: absolute;
  inset: 0 6px 0 -4px;
  border: 1px solid #fb2b1f;
  border-radius: 2px;
}
.large .subtabs { height: 15px; }
.large .sub { width: 57px; }
.large .sub.current { width: 52px; }
.large .marked::after { inset: 0 7px -1px 0; border-width: 2px; }

.filter {
  display: flex;
  align-items: center;
  gap: 2px;
  height: 17px;
  padding-left: 2px;
}
.filter .field { width: 359px; height: 13px; padding: 0 2px; }
.step-btn { width: 8px; height: 12px; border: 1px solid #c4c4c4; background: #e2e2e2; color: #888; }
.vars { display: flex; gap: 9px; }
.filter .vars { margin-left: 10px; }
.var { display: flex; align-items: center; gap: 2px; }

.sheet {
  height: 137px;
  margin-left: 2px;
  overflow: hidden;
  border-top: 1px solid #b9c6cd;
}
.parts {
  width: 656px;
  table-layout: fixed;
  border-collapse: collapse;
}
.parts col { width: 37px; }
.parts .c-no { width: 13px; }
.parts .c-code { width: 38px; }
.parts .c-type { width: 52px; }
.parts .c-tha { width: 50px; }
.parts .c-zz { width: 48px; }
.parts th, .parts td {
  position: relative;
  height: 13px;
  padding: 0 1px;
  overflow: hidden;
  border-right: 1px solid #dadada;
  text-align: center;
  white-space: nowrap;
}
.parts .names th {
  height: 25px;
  padding-top: 1px;
  font-size: 7px;
  line-height: 12px;
  vertical-align: top;
}
.parts small { display: block; padding-left: 1px; font-size: 6px; font-weight: 400; line-height: 11px; text-align: left; }
.parts .ed { padding-right: 9px; }
.parts .corner { position: absolute; right: 2px; top: 2px; }
.parts input { display: block; width: 100%; height: 12px; border: 1px solid #b9b9b9; background: #fff; }
.parts tbody tr:nth-child(even) { background: #f5f5f5; }
.parts tbody td, .parts tbody th { border-bottom: 1px solid #e6e6e6; }
.parts tbody th { font-weight: 700; text-align: right; padding-right: 3px; }
.parts tbody tr.selected { background: #7a9bb0; color: #fff; }

.split { display: grid; }
.split-info { grid-template-columns: 241px 5px minmax(0, 1fr); }
.split-form { grid-template-columns: 281px 5px minmax(0, 1fr); }
.splitter { border: solid #e3edf3; border-width: 0 1px 0 2px; background: #8fb0c8; }
.panel { display: flex; flex-direction: column; min-width: 0; overflow: hidden; }

.lang {
  display: flex;
  align-items: center;
  justify-content: space-between;
  height: 19px;
  padding: 0 3px 0 4px;
}
.lang .combo { width: 116px; }

.info {
  width: 233px;
  margin: 4px 0 8px 5px;
  table-layout: fixed;
  border-spacing: 0;
  border: solid #b5cdd9;
  border-width: 1px 0 1px 1px;
}
.info th, .info td { height: 14px; padding: 0 0 0 3px; border-bottom: 1px solid #fff; text-align: left; white-space: nowrap; }
.info th { width: 106px; background: #e0eef5; }
.info td { overflow: hidden; border-left: 2px solid #fff; }
.info a { font-family: Lato, "Noto Sans CJK SC", sans-serif; }
.info tr:nth-child(odd) td { background: #f2f2f2; }
.info tr:nth-child(5) td { height: 22px; }

.cns { margin: 0 3px 0 5px; border: solid #b5cdd9; border-width: 1px 0 1px 1px; }
.cns h3 { padding-left: 3px; background: #cad8df; color: #111; font-size: 10px; line-height: 19px; }
.cns h4 { padding-left: 3px; background: #e0eef5; font-size: 6px; line-height: 13px; }
.cns dl { display: grid; grid-template-columns: 107px 1fr; padding-left: 3px; color: #666; line-height: 13px; }

.scroll { display: flex; align-items: center; justify-content: space-between; height: 4px; margin: auto 3px 0 7px; }
.thumb { flex: 1; height: 4px; margin: 0 22px 0 4px; border-radius: 2px; background: #777; }
.arr { border: 2px solid transparent; }
.left { border-left: 0; border-right: 3px solid #333; }
.right { border-right: 0; border-left: 3px solid #333; }

.viewport {
  position: relative;
  flex: 1;
  background: linear-gradient(#dbe6ed, #f2f6f9 62%, #fff 92%);
}
.scene { width: 100%; height: auto; }
.over {
  position: absolute;
  left: 38px;
  top: 64px;
  font-size: 12px;
  line-height: 22px;
}

.toolbar {
  position: absolute;
  left: 44px;
  bottom: 11px;
  display: flex;
}
.toolbar button {
  display: flex;
  align-items: center;
  justify-content: center;
  width: 15px;
  height: 15px;
  border: 1px solid transparent;
}
.toolbar svg { width: 11px; height: 11px; }
.toolbar .lead { margin-left: 4px; }
.toolbar .on { border-color: #bdbdbd; background: #fcfdfd; }
.toolbar .wide { width: 26px; padding: 0 2px; }
.large .toolbar { left: 32px; bottom: 20px; }
.large .toolbar button { width: 18px; height: 18px; }
.large .toolbar .lead { margin-left: 5px; }
.large .toolbar .wide { width: 32px; }
.large .toolbar svg { width: 13px; height: 13px; }

/* Vertical parameter form */
.panel > .vars { height: 17px; padding: 0 0 2px 1px; gap: 10px; }
.large .var { gap: 3px; }
.form-box { flex: 1; margin-right: 2px; border: 1px solid #c9c9c9; border-left-color: #dcdcdc; }
.form { width: 276px; height: 389px; table-layout: fixed; border-collapse: collapse; }
.form th, .form td { height: 24px; padding: 0 3px; border: 1px solid #b4b4b4; background: #e8e8e8; text-align: left; }
.form tr:nth-child(odd) > * { background: #efefef; }
.form th { width: 127px; padding: 0 1px; vertical-align: top; color: #000; font-size: 8px; line-height: 11px; }
.form small { display: block; color: #222; font-size: 7px; font-weight: 400; line-height: 11px; }
.form td:last-child { width: 21px; padding: 0 1px; }
.form .combo { height: 16px; }
.form .combo select { padding-left: 3px; }
.form button {
  display: grid;
  place-items: center;
  width: 100%;
  height: 21px;
  border: 1px solid #8199a6;
  background: #cbdde6;
  color: #000;
}
.form button svg { width: 10px; height: 10px; }
.form .ok { color: #2fa83a; }
.form .idle { color: #9aaab2; }
.recalc {
  display: flex;
  align-items: center;
  justify-content: center;
  gap: 5px;
  height: 19px;
  margin: 5px 3px 5px 2px;
  border: 1px solid #5f859c;
  background: #7a9bb0;
  color: #eef4f7;
}
.recalc svg { width: 8px; height: 14px; }
```
